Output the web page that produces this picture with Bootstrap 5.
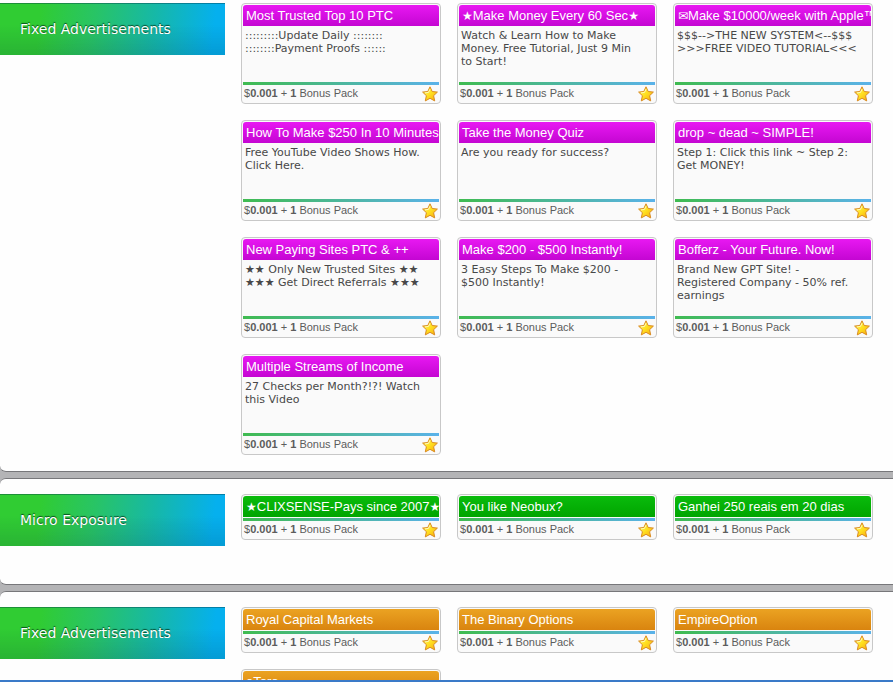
<!DOCTYPE html>
<html lang="en">
<head>
<meta charset="utf-8">
<meta name="viewport" content="width=device-width, initial-scale=1">
<title>View Advertisements</title>
<link href="https://cdn.jsdelivr.net/npm/bootstrap@5.3.0/dist/css/bootstrap.min.css" rel="stylesheet">
<style>
body { background: #b4b4b6; font-family: "Liberation Sans", Arial, sans-serif; }
.page { border-bottom: 2px solid #3a7ac8; }
.panel { background: #fefefe; border: 1px solid #77777a; border-width: 1px 0; border-radius: 6px 0 0 6px; padding: 15px 0 38px; }
.panel-first { border-top: 0; border-top-left-radius: 0; padding: 3px 0 16px; }
.panels { gap: 6px; }
.banner { width: 225px; height: 52px; padding: 0 20px; background: linear-gradient(rgba(0,0,0,0) 40%, rgba(0,30,60,.14)), linear-gradient(97deg, #30cc33 18%, #28c466 42%, #16b8a8 68%, #05b0ee 94%); border-top: 1px solid rgba(0,60,60,.3); color: #fff; font: 14px/50px "DejaVu Sans", Verdana, sans-serif; text-shadow: 0 -1px 1px rgba(0,50,20,.85); }
.ad { width: 200px; padding: 1px; background: #fafafa; border: 1px solid #c8c8c8; border-radius: 4px; }
.ad-title { height: 21px; padding: 0 3px; border-radius: 3px 3px 0 0; color: #fff; font-size: 13px; font-weight: 400; line-height: 21px; }
.ad-title a { color: inherit; }
.ad-title span { font-family: "DejaVu Sans", sans-serif; font-size: 12px; line-height: 1; }
.violet { background: linear-gradient(#e818f2, #c406d2); }
.green { background: linear-gradient(#0abb0c, #00a500); }
.orange { background: linear-gradient(#eba322, #d9840f); }
.ad-text { height: 56px; padding: 3px 2px 0; color: #484848; font: 11px/13px "DejaVu Sans", Verdana, sans-serif; }
.bar { height: 3px; background: linear-gradient(90deg, #3fbb50, #5ab2ea); }
.bar-gap { margin-top: 1px; }
.ad-foot { height: 17px; padding: 0 1px; color: #5c5c5c; font-size: 11px; line-height: 17px; }
.star { width: 16px; height: 16px; }
</style>
</head>
<body>
<svg class="position-absolute" width="0" height="0" aria-hidden="true">
  <defs>
    <linearGradient id="gold" x1="0" y1="0" x2="1" y2="1"><stop offset="0" stop-color="#fff56a"/><stop offset=".5" stop-color="#ffe020"/><stop offset="1" stop-color="#f7a50c"/></linearGradient>
    <symbol id="star" viewBox="0 0 16 16"><path d="M8 .8 10.2 5.500 15.400 6.100 11.600 9.700 12.700 14.900 8 12.300 3.300 14.900 4.400 9.700 .6 6.100 5.800 5.500Z" fill="url(#gold)" stroke="#d98a22" stroke-width="1" stroke-linejoin="round"/><path d="M8 3.200 6.500 6.400 3 6.900" fill="none" stroke="#fffbb8" stroke-width="1"/></symbol>
  </defs>
</svg>
<div class="page vh-100 overflow-hidden">
<main class="panels d-flex flex-column">

<section class="panel panel-first d-flex gap-3 align-items-start">
  <h2 class="banner flex-shrink-0 m-0">Fixed Advertisements</h2>
  <div class="d-flex flex-wrap gap-3">
    <article class="ad"><h3 class="ad-title violet m-0 text-nowrap overflow-hidden"><a class="text-decoration-none" href="#">Most Trusted Top 10 PTC</a></h3><p class="ad-text m-0">:::::::::Update Daily ::::::::<br>::::::::Payment Proofs ::::::</p><div class="bar"></div><div class="ad-foot d-flex justify-content-between align-items-center"><div>$<b>0.001</b> + <b>1</b> Bonus Pack</div><svg class="star"><use href="#star"/></svg></div></article>
    <article class="ad"><h3 class="ad-title violet m-0 text-nowrap overflow-hidden"><a class="text-decoration-none" href="#"><span>★</span>Make Money Every 60 Sec<span>★</span></a></h3><p class="ad-text m-0">Watch &amp; Learn How to Make<br>Money. Free Tutorial, Just 9 Min<br>to Start!</p><div class="bar"></div><div class="ad-foot d-flex justify-content-between align-items-center"><div>$<b>0.001</b> + <b>1</b> Bonus Pack</div><svg class="star"><use href="#star"/></svg></div></article>
    <article class="ad"><h3 class="ad-title violet m-0 text-nowrap overflow-hidden"><a class="text-decoration-none" href="#"><span>✉</span>Make $10000/week with Apple™</a></h3><p class="ad-text m-0">$$$--&gt;THE NEW SYSTEM&lt;--$$$<br>&gt;&gt;&gt;FREE VIDEO TUTORIAL&lt;&lt;&lt;</p><div class="bar"></div><div class="ad-foot d-flex justify-content-between align-items-center"><div>$<b>0.001</b> + <b>1</b> Bonus Pack</div><svg class="star"><use href="#star"/></svg></div></article>
    <article class="ad"><h3 class="ad-title violet m-0 text-nowrap overflow-hidden"><a class="text-decoration-none" href="#">How To Make $250 In 10 Minutes</a></h3><p class="ad-text m-0">Free YouTube Video Shows How.<br>Click Here.</p><div class="bar"></div><div class="ad-foot d-flex justify-content-between align-items-center"><div>$<b>0.001</b> + <b>1</b> Bonus Pack</div><svg class="star"><use href="#star"/></svg></div></article>
    <article class="ad"><h3 class="ad-title violet m-0 text-nowrap overflow-hidden"><a class="text-decoration-none" href="#">Take the Money Quiz</a></h3><p class="ad-text m-0">Are you ready for success?</p><div class="bar"></div><div class="ad-foot d-flex justify-content-between align-items-center"><div>$<b>0.001</b> + <b>1</b> Bonus Pack</div><svg class="star"><use href="#star"/></svg></div></article>
    <article class="ad"><h3 class="ad-title violet m-0 text-nowrap overflow-hidden"><a class="text-decoration-none" href="#">drop ~ dead ~ SIMPLE!</a></h3><p class="ad-text m-0">Step 1: Click this link ~ Step 2:<br>Get MONEY!</p><div class="bar"></div><div class="ad-foot d-flex justify-content-between align-items-center"><div>$<b>0.001</b> + <b>1</b> Bonus Pack</div><svg class="star"><use href="#star"/></svg></div></article>
    <article class="ad"><h3 class="ad-title violet m-0 text-nowrap overflow-hidden"><a class="text-decoration-none" href="#">New Paying Sites PTC &amp; ++</a></h3><p class="ad-text m-0">★★ Only New Trusted Sites ★★<br>★★★ Get Direct Referrals ★★★</p><div class="bar"></div><div class="ad-foot d-flex justify-content-between align-items-center"><div>$<b>0.001</b> + <b>1</b> Bonus Pack</div><svg class="star"><use href="#star"/></svg></div></article>
    <article class="ad"><h3 class="ad-title violet m-0 text-nowrap overflow-hidden"><a class="text-decoration-none" href="#">Make $200 - $500 Instantly!</a></h3><p class="ad-text m-0">3 Easy Steps To Make $200 -<br>$500 Instantly!</p><div class="bar"></div><div class="ad-foot d-flex justify-content-between align-items-center"><div>$<b>0.001</b> + <b>1</b> Bonus Pack</div><svg class="star"><use href="#star"/></svg></div></article>
    <article class="ad"><h3 class="ad-title violet m-0 text-nowrap overflow-hidden"><a class="text-decoration-none" href="#">Bofferz - Your Future. Now!</a></h3><p class="ad-text m-0">Brand New GPT Site! -<br>Registered Company - 50% ref.<br>earnings</p><div class="bar"></div><div class="ad-foot d-flex justify-content-between align-items-center"><div>$<b>0.001</b> + <b>1</b> Bonus Pack</div><svg class="star"><use href="#star"/></svg></div></article>
    <article class="ad"><h3 class="ad-title violet m-0 text-nowrap overflow-hidden"><a class="text-decoration-none" href="#">Multiple Streams of Income</a></h3><p class="ad-text m-0">27 Checks per Month?!?! Watch<br>this Video</p><div class="bar"></div><div class="ad-foot d-flex justify-content-between align-items-center"><div>$<b>0.001</b> + <b>1</b> Bonus Pack</div><svg class="star"><use href="#star"/></svg></div></article>
  </div>
</section>

<section class="panel d-flex gap-3 align-items-start">
  <h2 class="banner flex-shrink-0 m-0">Micro Exposure</h2>
  <div class="d-flex flex-wrap gap-3">
    <article class="ad"><h3 class="ad-title green m-0 text-nowrap overflow-hidden"><a class="text-decoration-none" href="#"><span>★</span>CLIXSENSE-Pays since 2007<span>★</span></a></h3><div class="bar bar-gap"></div><div class="ad-foot d-flex justify-content-between align-items-center"><div>$<b>0.001</b> + <b>1</b> Bonus Pack</div><svg class="star"><use href="#star"/></svg></div></article>
    <article class="ad"><h3 class="ad-title green m-0 text-nowrap overflow-hidden"><a class="text-decoration-none" href="#">You like Neobux?</a></h3><div class="bar bar-gap"></div><div class="ad-foot d-flex justify-content-between align-items-center"><div>$<b>0.001</b> + <b>1</b> Bonus Pack</div><svg class="star"><use href="#star"/></svg></div></article>
    <article class="ad"><h3 class="ad-title green m-0 text-nowrap overflow-hidden"><a class="text-decoration-none" href="#">Ganhei 250 reais em 20 dias</a></h3><div class="bar bar-gap"></div><div class="ad-foot d-flex justify-content-between align-items-center"><div>$<b>0.001</b> + <b>1</b> Bonus Pack</div><svg class="star"><use href="#star"/></svg></div></article>
  </div>
</section>

<section class="panel d-flex gap-3 align-items-start">
  <h2 class="banner flex-shrink-0 m-0">Fixed Advertisements</h2>
  <div class="d-flex flex-wrap gap-3">
    <article class="ad"><h3 class="ad-title orange m-0 text-nowrap overflow-hidden"><a class="text-decoration-none" href="#">Royal Capital Markets</a></h3><div class="bar bar-gap"></div><div class="ad-foot d-flex justify-content-between align-items-center"><div>$<b>0.001</b> + <b>1</b> Bonus Pack</div><svg class="star"><use href="#star"/></svg></div></article>
    <article class="ad"><h3 class="ad-title orange m-0 text-nowrap overflow-hidden"><a class="text-decoration-none" href="#">The Binary Options</a></h3><div class="bar bar-gap"></div><div class="ad-foot d-flex justify-content-between align-items-center"><div>$<b>0.001</b> + <b>1</b> Bonus Pack</div><svg class="star"><use href="#star"/></svg></div></article>
    <article class="ad"><h3 class="ad-title orange m-0 text-nowrap overflow-hidden"><a class="text-decoration-none" href="#">EmpireOption</a></h3><div class="bar bar-gap"></div><div class="ad-foot d-flex justify-content-between align-items-center"><div>$<b>0.001</b> + <b>1</b> Bonus Pack</div><svg class="star"><use href="#star"/></svg></div></article>
    <article class="ad"><h3 class="ad-title orange m-0 text-nowrap overflow-hidden"><a class="text-decoration-none" href="#">eToro</a></h3><div class="bar bar-gap"></div><div class="ad-foot d-flex justify-content-between align-items-center"><div>$<b>0.001</b> + <b>1</b> Bonus Pack</div><svg class="star"><use href="#star"/></svg></div></article>
  </div>
</section>

</main>
</div>
<script src="https://cdn.jsdelivr.net/npm/bootstrap@5.3.0/dist/js/bootstrap.bundle.min.js"></script>
</body>
</html>
